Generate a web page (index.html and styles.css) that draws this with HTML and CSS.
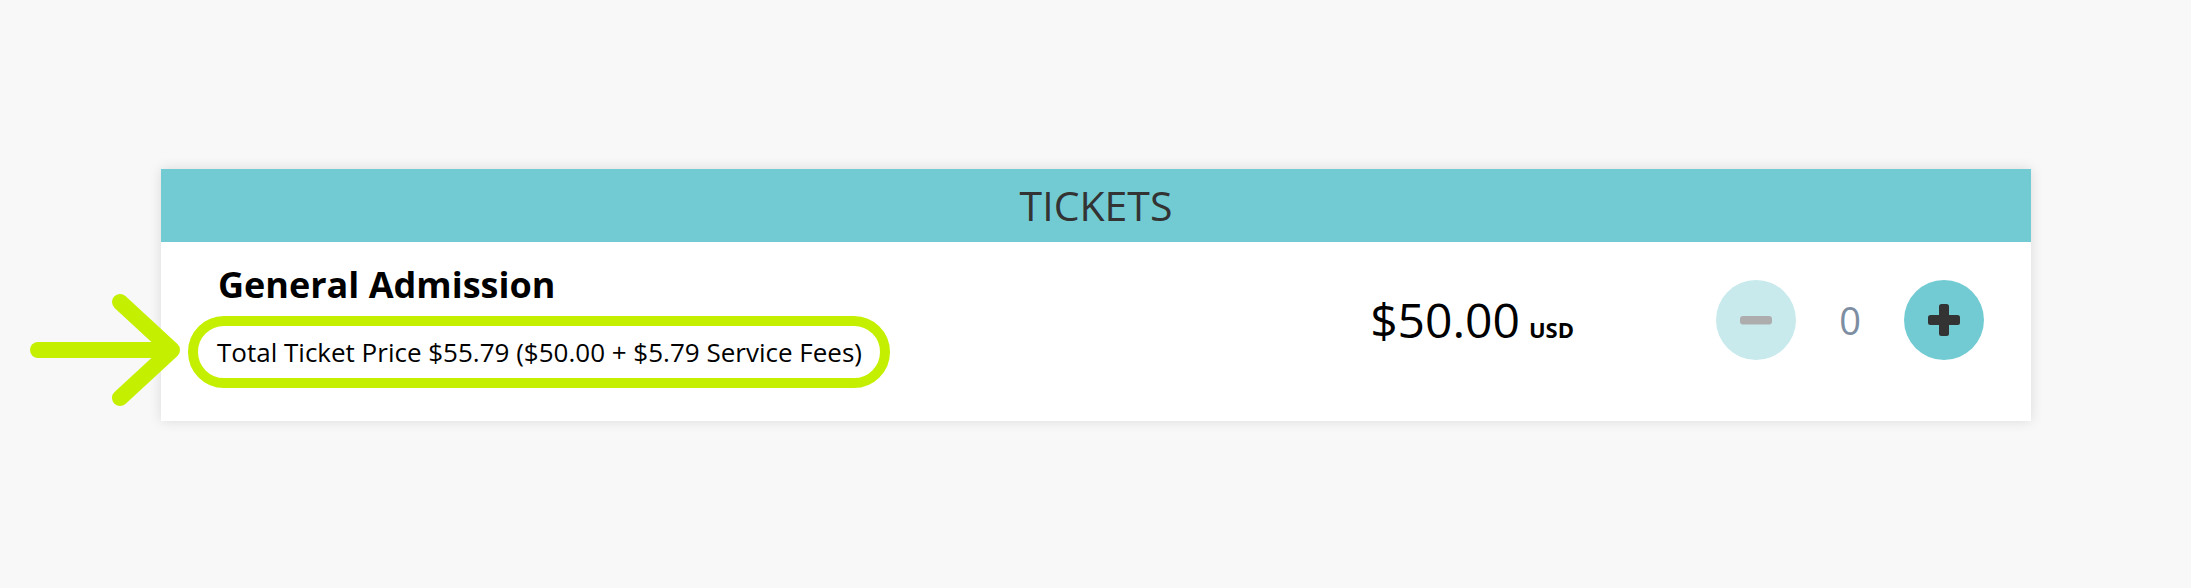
FILE: index.html
```html
<!DOCTYPE html>
<html lang="en">
<head>
    <meta charset="UTF-8">
    <meta name="viewport" content="width=device-width, initial-scale=1.0">
    <title>Tickets</title>
    <link rel="stylesheet" href="styles.css">
</head>
<body>
    <div class="tickets">
        <div class="tickets-header">TICKETS</div>
        <div class="ticket-row">
            <div class="ticket-info">
                <div class="ticket-name">General Admission</div>
                <span class="ticket-total">Total Ticket Price $55.79 ($50.00 + $5.79 Service Fees)</span>
            </div>
            <div class="ticket-price">$50.00<span class="currency">USD</span></div>
            <div class="qty">
                <button class="qty-btn minus" aria-label="Remove ticket">
                    <svg width="32" height="32" viewBox="0 0 32 32"><rect x="0" y="12" width="32" height="8.5" rx="3" fill="#adadad"/></svg>
                </button>
                <span class="qty-count">0</span>
                <button class="qty-btn plus" aria-label="Add ticket">
                    <svg width="32" height="32" viewBox="0 0 32 32"><rect x="0" y="11" width="32" height="10" rx="2.5" fill="#333"/><rect x="11" y="0" width="10" height="32" rx="2.5" fill="#333"/></svg>
                </button>
            </div>
        </div>
    </div>

    <!-- annotation arrow -->
    <svg class="arrow" width="180" height="130" viewBox="0 0 180 130">
        <g fill="none" stroke="#c4f000" stroke-width="16" stroke-linecap="round" stroke-linejoin="round">
            <line x1="38" y1="65" x2="170" y2="65"/>
            <polyline points="120,17 172,65 120,113"/>
        </g>
    </svg>
</body>
</html>
```

FILE: styles.css
```css
body {
    margin: 0;
    padding: 169px 160px 169px 161px;
    background-color: #f8f8f8;
    font-family: "Open Sans", sans-serif;
    position: relative;
}
.tickets {
    background-color: #fff;
    box-shadow: 0 0 12px rgba(0, 0, 0, 0.12);
}
.tickets-header {
    height: 73px;
    line-height: 73px;
    text-align: center;
    background-color: #72cbd3;
    color: #333;
    font-size: 41px;
}
.ticket-row {
    display: flex;
    align-items: center;
    padding: 18px 47px 33px 57px;
}
.ticket-info {
    flex: 1;
    display: flex;
    flex-direction: column;
    align-items: flex-start;
}
.ticket-name {
    font-size: 36px;
    font-weight: 700;
    color: #000;
}
.ticket-total {
    margin: 7px 0 0 -30px;
    padding: 8px 18px 8px 19px;
    border: 10px solid #c4f000;
    border-radius: 40px;
    font-size: 26px;
    color: #000;
}
.ticket-price {
    margin-bottom: 9px;
    font-size: 48px;
    color: #000;
}
.currency {
    margin-left: 9px;
    font-size: 22px;
    font-weight: 700;
}
.qty {
    display: flex;
    align-items: center;
    margin-left: 142px;
    margin-bottom: 9px;
}
.qty-btn {
    width: 80px;
    height: 80px;
    border: none;
    border-radius: 50%;
    padding: 0;
    display: flex;
    align-items: center;
    justify-content: center;
    cursor: pointer;
}
.qty-btn.minus {
    background-color: #c8eaec;
}
.qty-btn.plus {
    background-color: #72cbd3;
}
.qty-count {
    width: 108px;
    text-align: center;
    font-size: 38px;
    color: #7d8ea2;
}
.arrow {
    position: absolute;
    left: 0;
    top: 285px;
}
```
